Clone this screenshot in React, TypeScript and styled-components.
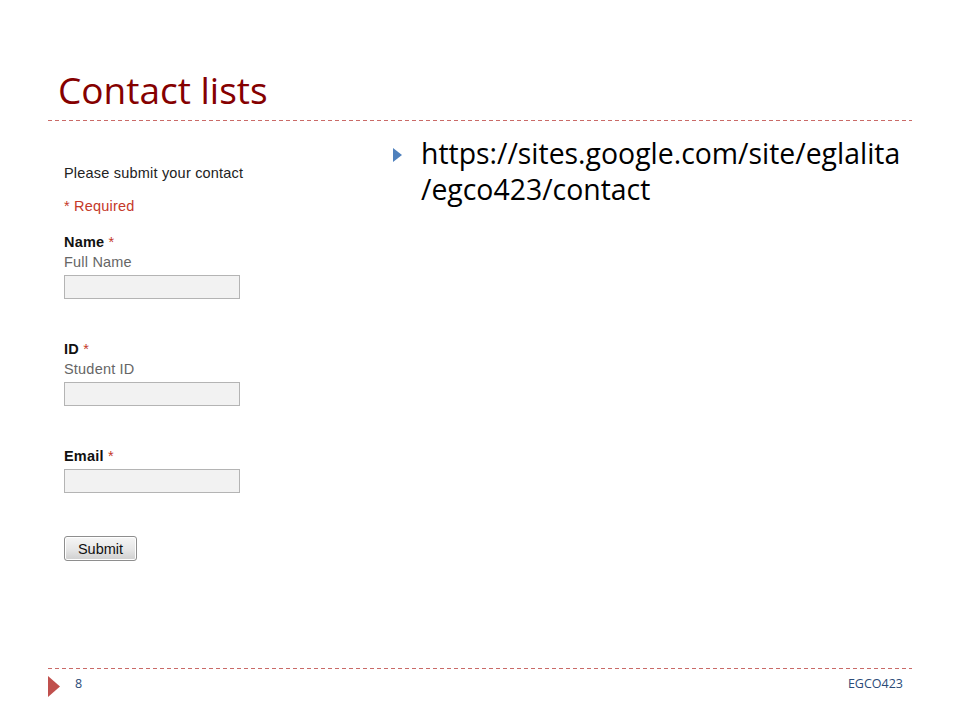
import styled, { createGlobalStyle } from 'styled-components';

const accentRed = '#c0504d';
const titleRed = '#850000';
const footerBlue = '#2b4b78';
const formRed = '#c53929';

const GlobalStyle = createGlobalStyle`
  html, body {
    margin: 0;
    padding: 0;
    background: #ffffff;
  }
`;

const Slide = styled.div`
  width: 960px;
  height: 720px;
  display: flex;
  flex-direction: column;
  background: #ffffff;
  overflow: hidden;
`;

const Title = styled.h1`
  margin: 0;
  padding: 67px 0 0 58px;
  font-family: 'Open Sans', 'Noto Sans', sans-serif;
  font-weight: 400;
  font-size: 37px;
  line-height: 46px;
  color: ${titleRed};
`;

const DashedRule = styled.div<{ $top: number }>`
  margin: ${(p) => p.$top}px 48px 0 48px;
  height: 1px;
  background: repeating-linear-gradient(
    to right,
    ${accentRed} 0 4px,
    transparent 4px 7px
  );
  opacity: 0.85;
`;

const Body = styled.div`
  flex: 1;
  display: grid;
  grid-template-columns: 393px 1fr;
`;

const FormColumn = styled.div`
  padding: 44px 0 0 64px;
  font-family: 'Liberation Sans', Arial, sans-serif;
  font-size: 14.5px;
  line-height: 16px;
  letter-spacing: 0.2px;
  color: #222222;
`;

const Intro = styled.div`
  margin: 0;
`;

const RequiredNote = styled.div`
  margin-top: 17px;
  color: ${formRed};
`;

const Field = styled.div<{ $gap: number }>`
  margin-top: ${(p) => p.$gap}px;
  display: flex;
  flex-direction: column;
  align-items: flex-start;
`;

const Label = styled.div`
  font-weight: 700;
  color: #111111;
`;

const Star = styled.span`
  font-weight: 400;
  color: ${formRed};
`;

const Hint = styled.div`
  margin-top: 4px;
  color: #666666;
`;

const TextBox = styled.div`
  margin-top: 5px;
  width: 174px;
  height: 22px;
  border: 1px solid #b4b4b4;
  background: #f2f2f2;
`;

const SubmitButton = styled.button`
  margin-top: 43px;
  width: 73px;
  height: 25px;
  padding: 0;
  font-family: 'Liberation Sans', Arial, sans-serif;
  font-size: 14.5px;
  color: #111111;
  border: 1px solid #8e8e8e;
  border-radius: 3px;
  background: linear-gradient(to bottom, #f6f6f6 0%, #e6e6e6 55%, #cfcfcf 100%);
  box-shadow: inset 0 0 0 1px #ffffff;
`;

const BulletColumn = styled.div`
  padding: 14px 30px 0 0;
`;

const BulletItem = styled.div`
  display: flex;
  align-items: flex-start;
  gap: 19px;
`;

const BulletMark = styled.svg`
  flex: none;
  margin-top: 13px;
  width: 9px;
  height: 14px;
`;

const BulletText = styled.div`
  font-family: 'Open Sans', 'Noto Sans', sans-serif;
  font-size: 28.4px;
  line-height: 36px;
  white-space: nowrap;
  color: #000000;
`;

const Footer = styled.div`
  height: 52px;
  display: flex;
  flex-direction: column;
`;

const FooterRow = styled.div`
  display: flex;
  align-items: flex-start;
  padding: 7px 57px 0 48px;
`;

const FooterMark = styled.svg`
  flex: none;
  width: 12px;
  height: 21px;
`;

const FooterText = styled.span<{ $grow?: boolean }>`
  font-family: 'Open Sans', 'Noto Sans', sans-serif;
  font-size: 12.5px;
  line-height: 16px;
  color: ${footerBlue};
  ${(p) => (p.$grow ? 'flex: 1; margin-left: 15px;' : '')}
`;

export default function App() {
  return (
    <>
      <GlobalStyle />
      <Slide>
        <Title>Contact lists</Title>
        <DashedRule $top={7} />
        <Body>
          <FormColumn>
            <Intro>Please submit your contact</Intro>
            <RequiredNote>* Required</RequiredNote>
            <Field $gap={20}>
              <Label>
                Name <Star>*</Star>
              </Label>
              <Hint>Full Name</Hint>
              <TextBox />
            </Field>
            <Field $gap={42}>
              <Label>
                ID <Star>*</Star>
              </Label>
              <Hint>Student ID</Hint>
              <TextBox />
            </Field>
            <Field $gap={42}>
              <Label>
                Email <Star>*</Star>
              </Label>
              <TextBox />
            </Field>
            <SubmitButton>Submit</SubmitButton>
          </FormColumn>
          <BulletColumn>
            <BulletItem>
              <BulletMark viewBox="0 0 9 14">
                <polygon points="0,0 9,7 0,14" fill="#4f81bd" />
              </BulletMark>
              <BulletText>
                https://sites.google.com/site/eglalita
                <br />
                /egco423/contact
              </BulletText>
            </BulletItem>
          </BulletColumn>
        </Body>
        <Footer>
          <DashedRule $top={0} />
          <FooterRow>
            <FooterMark viewBox="0 0 12 21">
              <polygon points="0,0 12,10.5 0,21" fill={accentRed} />
            </FooterMark>
            <FooterText $grow>8</FooterText>
            <FooterText>EGCO423</FooterText>
          </FooterRow>
        </Footer>
      </Slide>
    </>
  );
}
